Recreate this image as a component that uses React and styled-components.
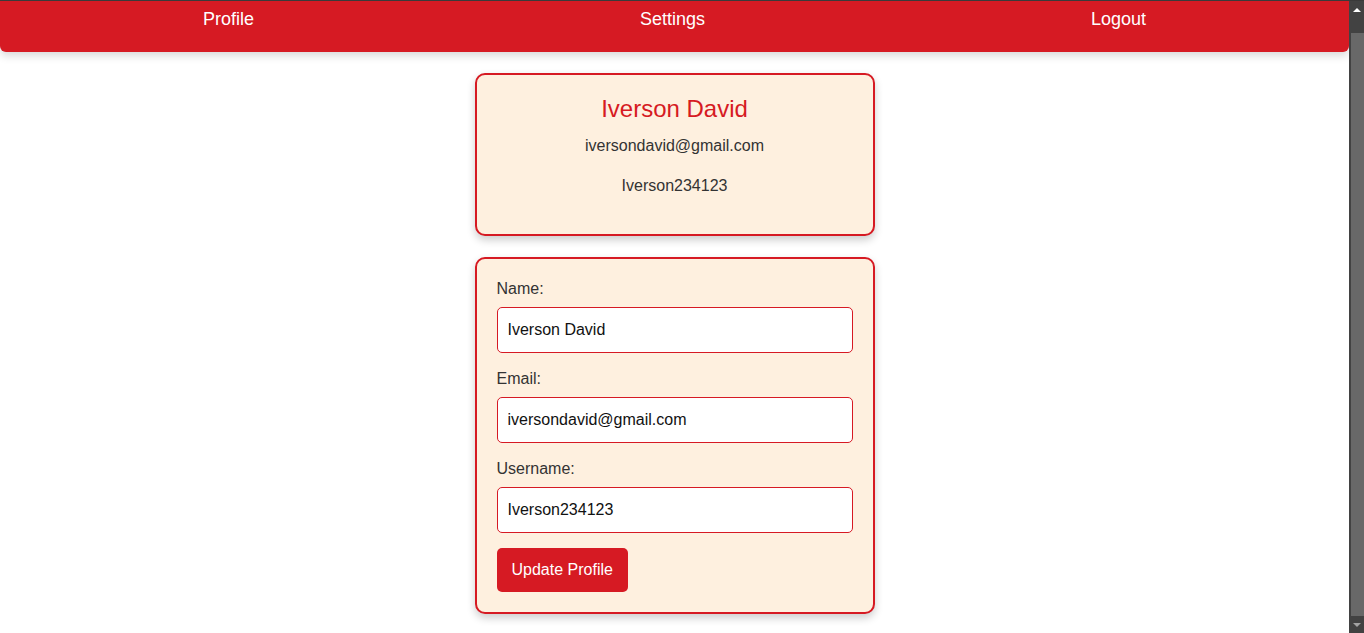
import React from 'react';
import styled, { createGlobalStyle } from 'styled-components';

const red = '#d61a23';
const cream = '#fef0df';

const GlobalStyle = createGlobalStyle`
	html {
		border-top: 1px solid #3a3a3a;
	}
	body {
		margin: 0 15px 0 0;
		font-family: 'Liberation Sans', Arial, sans-serif;
		background: #ffffff;
		color: #333;
	}
	* {
		box-sizing: border-box;
	}
`;

const Nav = styled.nav`
	display: flex;
	justify-content: space-around;
	align-items: flex-start;
	height: 51px;
	padding: 8px 10px 0;
	background-color: ${red};
	border-radius: 0 0 6px 6px;
	box-shadow: 0 4px 8px rgba(0, 0, 0, 0.15);
`;

const NavLink = styled.a`
	color: #ffffff;
	font-size: 18px;
	text-decoration: none;
	cursor: pointer;
`;

const Main = styled.main`
	display: flex;
	flex-direction: column;
	align-items: center;
	gap: 21px;
	padding: 21px 0 34px;
`;

const Card = styled.section`
	width: 400px;
	padding: 20px;
	background-color: ${cream};
	border: 2px solid ${red};
	border-radius: 10px;
	box-shadow: 0 4px 8px rgba(0, 0, 0, 0.2);
	text-align: ${(p) => (p.center ? 'center' : 'left')};
`;

const Name = styled.h2`
	margin: 0 0 14px;
	font-size: 24px;
	font-weight: 400;
	color: ${red};
`;

const Info = styled.p`
	margin: 0 0 ${(p) => p.gap || 0}px;
	font-size: 16px;
	color: #333;
`;

const Field = styled.div`
	margin-bottom: 16px;
`;

const Label = styled.label`
	display: block;
	margin-bottom: 8px;
	font-size: 16px;
	line-height: 20px;
	color: #333;
`;

const Input = styled.input`
	display: block;
	width: 100%;
	height: 46px;
	padding: 0 10px;
	font-family: 'Liberation Sans', Arial, sans-serif;
	font-size: 16px;
	color: #111;
	background: #ffffff;
	border: 1px solid ${red};
	border-radius: 5px;
	outline: none;
`;

const Button = styled.button`
	height: 44px;
	margin-top: -1px;
	padding: 0 15px;
	font-family: 'Liberation Sans', Arial, sans-serif;
	font-size: 16px;
	color: #ffffff;
	background-color: ${red};
	border: none;
	border-radius: 5px;
	cursor: pointer;
`;

/* stand-in for the browser's own scrollbar, which the screenshot shows */
const ScrollTrack = styled.div`
	position: fixed;
	top: 0;
	right: 0;
	width: 15px;
	height: 100vh;
	display: flex;
	flex-direction: column;
	background: #424242;
	border-top: 1px solid #3a3a3a;
`;

const ScrollArrow = styled.div`
	height: 17px;
	display: flex;
	align-items: center;
	justify-content: center;

	&:after {
		content: '';
		border-left: 4px solid transparent;
		border-right: 4px solid transparent;
		${(p) =>
			p.down
				? 'border-top: 4px solid #a3a3a3;'
				: 'border-bottom: 4px solid #ffffff;'}
	}
`;

const ScrollThumb = styled.div`
	flex: 1;
	margin: 15px 0 0 2px;
	background: #686868;
`;

const user = {
	name: 'Iverson David',
	email: 'iversondavid@gmail.com',
	username: 'Iverson234123',
};

const fields = [
	{ id: 'name', label: 'Name:', value: user.name },
	{ id: 'email', label: 'Email:', value: user.email },
	{ id: 'username', label: 'Username:', value: user.username },
];

const App = () => {
	return (
		<>
			<GlobalStyle />
			<Nav>
				<NavLink>Profile</NavLink>
				<NavLink>Settings</NavLink>
				<NavLink>Logout</NavLink>
			</Nav>
			<Main>
				<Card center>
					<Name>{user.name}</Name>
					<Info gap={22}>{user.email}</Info>
					<Info gap={19}>{user.username}</Info>
				</Card>
				<Card as="form" onSubmit={(e) => e.preventDefault()}>
					{fields.map((f) => (
						<Field key={f.id}>
							<Label htmlFor={f.id}>{f.label}</Label>
							<Input id={f.id} defaultValue={f.value} />
						</Field>
					))}
					<Button type="submit">Update Profile</Button>
				</Card>
			</Main>
			<ScrollTrack>
				<ScrollArrow />
				<ScrollThumb />
				<ScrollArrow down />
			</ScrollTrack>
		</>
	);
};

export default App;
